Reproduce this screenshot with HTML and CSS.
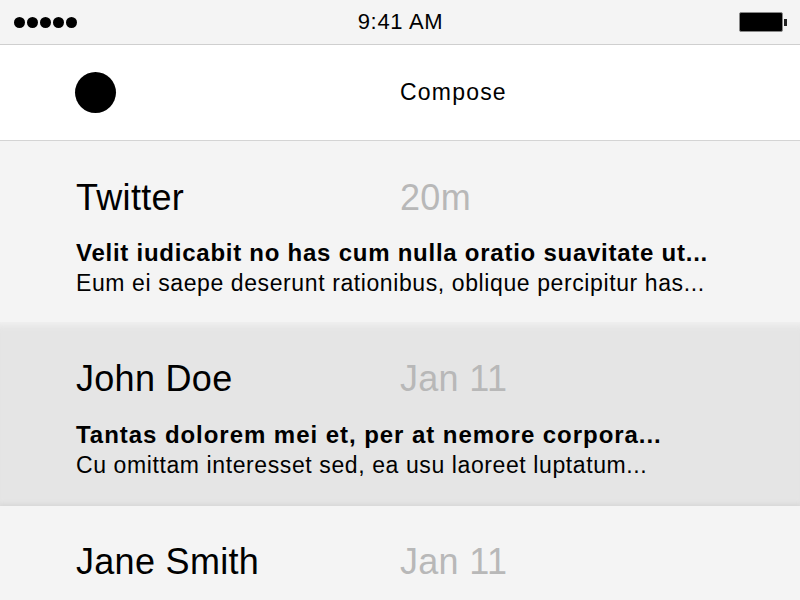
FILE: index.html
```html
<!DOCTYPE html>
<html>
<head>
<meta charset="utf-8">
<link rel="stylesheet" href="styles.css">
</head>
<body>
<div class="status">
  <div class="signal"><span></span><span></span><span></span><span></span><span></span></div>
  <div class="time">9:41 AM</div>
  <div class="battery"><div class="cell"></div><div class="nub"></div></div>
</div>
<div class="nav">
  <div class="avatar"></div>
  <div class="compose">Compose</div>
</div>
<div class="list">
  <div class="row">
    <div class="head"><div class="name">Twitter</div><div class="date">20m</div></div>
    <div class="subject">Velit iudicabit no has cum nulla oratio suavitate ut...</div>
    <div class="preview">Eum ei saepe deserunt rationibus, oblique percipitur has...</div>
  </div>
  <div class="row selected">
    <div class="head"><div class="name">John Doe</div><div class="date">Jan 11</div></div>
    <div class="subject">Tantas dolorem mei et, per at nemore corpora...</div>
    <div class="preview">Cu omittam interesset sed, ea usu laoreet luptatum...</div>
  </div>
  <div class="row last">
    <div class="head"><div class="name">Jane Smith</div><div class="date">Jan 11</div></div>
  </div>
</div>
</body>
</html>
```
FILE: styles.css
```css
html, body {
  margin: 0;
  padding: 0;
  background: #f4f4f4;
  font-family: "Liberation Sans", Arial, sans-serif;
  color: #000;
  overflow: hidden;
}
.status {
  height: 44px;
  background: #f4f4f4;
  border-bottom: 1px solid #cfcfcf;
  display: flex;
  align-items: center;
  justify-content: space-between;
  padding: 0 13px 0 14px;
}
.signal {
  display: flex;
  gap: 2px;
  width: 120px;
}
.signal span {
  width: 11px;
  height: 11px;
  border-radius: 50%;
  background: #000;
}
.time {
  font-size: 22px;
  letter-spacing: 0.7px;
}
.battery {
  width: 120px;
  display: flex;
  justify-content: flex-end;
  align-items: center;
}
.cell {
  width: 42px;
  height: 18px;
  background: #000;
  border: 1px solid #888;
  border-radius: 2px;
}
.nub {
  width: 3px;
  height: 7px;
  background: #222;
  margin-left: 1px;
}
.nav {
  height: 95px;
  background: #fff;
  border-bottom: 1px solid #d4d4d4;
  display: flex;
  align-items: center;
  padding-left: 75px;
}
.avatar {
  width: 41px;
  height: 41px;
  border-radius: 50%;
  background: #000;
}
.compose {
  margin-left: 284px;
  font-size: 23px;
  letter-spacing: 1.2px;
}
.row {
  height: 181px;
  padding: 36px 0 0 76px;
  box-sizing: border-box;
  background: #f4f4f4;
}
.row.selected {
  background: #e5e5e5;
  box-shadow: inset 0 6px 6px -3px #f1f1f1, inset 0 -4px 5px -2px #d6d6d6;
  height: 184px;
}
.row.last {
  padding-top: 35px;
}
.head {
  display: flex;
  align-items: baseline;
  height: 40px;
}
.name {
  width: 324px;
  font-size: 36px;
  letter-spacing: 0.3px;
}
.date {
  font-size: 36px;
  color: #b8b8b8;
  letter-spacing: 0.3px;
}
.subject {
  margin-top: 21px;
  font-size: 24px;
  font-weight: bold;
  line-height: 30px;
  letter-spacing: 0.75px;
}
.row.selected .subject {
  margin-top: 22px;
  letter-spacing: 0.95px;
}
.preview {
  font-size: 23px;
  line-height: 30px;
  letter-spacing: 0.6px;
}
```
